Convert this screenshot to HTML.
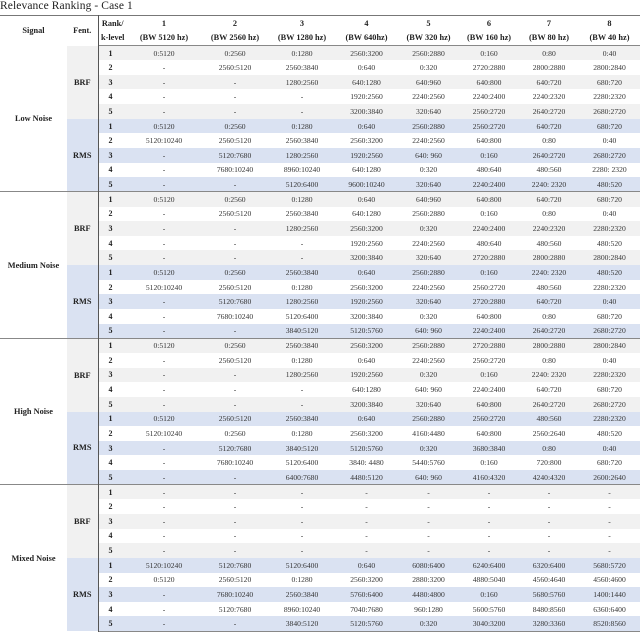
<!DOCTYPE html>
<html><head><meta charset="utf-8"><style>
*{margin:0;padding:0;box-sizing:border-box}
body{width:640px;height:632px;background:#fff;font-family:"Liberation Serif",serif;color:#333;overflow:hidden;position:relative}
.title{position:absolute;left:0;top:0;font-size:11.5px;line-height:12px;color:#222;letter-spacing:0.1px}
table{position:absolute;left:0;top:15px;width:640px;border-collapse:collapse;table-layout:fixed;font-size:7.6px}
td,th{text-align:center;vertical-align:middle;padding:0;white-space:nowrap;overflow:hidden}
thead tr{height:15px}
thead th{font-weight:bold;font-size:8.3px;color:#222}
thead tr:first-child th{border-top:1.5px solid #777}
thead tr:last-child th{border-bottom:1.5px solid #888}
tbody tr{height:14.65px}
.v{border-right:1px solid #555}
.s{font-weight:bold;font-size:8.3px;color:#222;background:#fff}
.f{font-weight:bold;font-size:8.3px;color:#222}
.k{font-weight:bold;font-size:8px;color:#222;text-align:left;padding-left:10px}
.g td{background:#f1f1f1}
.b td{background:#dae2f2}
.w td{background:#fff}
td.fg{background:#f1f1f1}
td.fb{background:#dae2f2}
td.s{background:#fff}
.top td{border-top:1.5px solid #888}
.last td{border-bottom:1.5px solid #888}
</style></head><body>
<div class="title">Relevance Ranking - Case 1</div>
<table>
<colgroup><col style="width:67px"><col style="width:31px"><col style="width:29px"><col style="width:74px"><col style="width:68px"><col style="width:66px"><col style="width:63px"><col style="width:61px"><col style="width:60px"><col style="width:60px"><col style="width:61px"></colgroup>
<thead>
<tr><th rowspan="2">Signal</th><th rowspan="2" class="v">Fent.</th><th>Rank/</th><th>1</th><th>2</th><th>3</th><th>4</th><th>5</th><th>6</th><th>7</th><th>8</th></tr>
<tr><th>k-level</th><th>(BW 5120 hz)</th><th>(BW 2560 hz)</th><th>(BW 1280 hz)</th><th>(BW 640hz)</th><th>(BW 320 hz)</th><th>(BW 160 hz)</th><th>(BW 80 hz)</th><th>(BW 40 hz)</th></tr>
</thead>
<tbody>
<tr class="g"><td rowspan="10" class="s">Low Noise</td><td rowspan="5" class="f fg v">BRF</td><td class="k">1</td><td>0:5120</td><td>0:2560</td><td>0:1280</td><td>2560:3200</td><td>2560:2880</td><td>0:160</td><td>0:80</td><td>0:40</td></tr>
<tr class="w"><td class="k">2</td><td>-</td><td>2560:5120</td><td>2560:3840</td><td>0:640</td><td>0:320</td><td>2720:2880</td><td>2800:2880</td><td>2800:2840</td></tr>
<tr class="g"><td class="k">3</td><td>-</td><td>-</td><td>1280:2560</td><td>640:1280</td><td>640:960</td><td>640:800</td><td>640:720</td><td>680:720</td></tr>
<tr class="w"><td class="k">4</td><td>-</td><td>-</td><td>-</td><td>1920:2560</td><td>2240:2560</td><td>2240:2400</td><td>2240:2320</td><td>2280:2320</td></tr>
<tr class="g"><td class="k">5</td><td>-</td><td>-</td><td>-</td><td>3200:3840</td><td>320:640</td><td>2560:2720</td><td>2640:2720</td><td>2680:2720</td></tr>
<tr class="b"><td rowspan="5" class="f fb v">RMS</td><td class="k">1</td><td>0:5120</td><td>0:2560</td><td>0:1280</td><td>0:640</td><td>2560:2880</td><td>2560:2720</td><td>640:720</td><td>680:720</td></tr>
<tr class="w"><td class="k">2</td><td>5120:10240</td><td>2560:5120</td><td>2560:3840</td><td>2560:3200</td><td>2240:2560</td><td>640:800</td><td>0:80</td><td>0:40</td></tr>
<tr class="b"><td class="k">3</td><td>-</td><td>5120:7680</td><td>1280:2560</td><td>1920:2560</td><td>640: 960</td><td>0:160</td><td>2640:2720</td><td>2680:2720</td></tr>
<tr class="w"><td class="k">4</td><td>-</td><td>7680:10240</td><td>8960:10240</td><td>640:1280</td><td>0:320</td><td>480:640</td><td>480:560</td><td>2280: 2320</td></tr>
<tr class="b"><td class="k">5</td><td>-</td><td>-</td><td>5120:6400</td><td>9600:10240</td><td>320:640</td><td>2240:2400</td><td>2240: 2320</td><td>480:520</td></tr>

<tr class="g top"><td rowspan="10" class="s">Medium Noise</td><td rowspan="5" class="f fg v">BRF</td><td class="k">1</td><td>0:5120</td><td>0:2560</td><td>0:1280</td><td>0:640</td><td>640:960</td><td>640:800</td><td>640:720</td><td>680:720</td></tr>
<tr class="w"><td class="k">2</td><td>-</td><td>2560:5120</td><td>2560:3840</td><td>640:1280</td><td>2560:2880</td><td>0:160</td><td>0:80</td><td>0:40</td></tr>
<tr class="g"><td class="k">3</td><td>-</td><td>-</td><td>1280:2560</td><td>2560:3200</td><td>0:320</td><td>2240:2400</td><td>2240:2320</td><td>2280:2320</td></tr>
<tr class="w"><td class="k">4</td><td>-</td><td>-</td><td>-</td><td>1920:2560</td><td>2240:2560</td><td>480:640</td><td>480:560</td><td>480:520</td></tr>
<tr class="g"><td class="k">5</td><td>-</td><td>-</td><td>-</td><td>3200:3840</td><td>320:640</td><td>2720:2880</td><td>2800:2880</td><td>2800:2840</td></tr>
<tr class="b"><td rowspan="5" class="f fb v">RMS</td><td class="k">1</td><td>0:5120</td><td>0:2560</td><td>2560:3840</td><td>0:640</td><td>2560:2880</td><td>0:160</td><td>2240: 2320</td><td>480:520</td></tr>
<tr class="w"><td class="k">2</td><td>5120:10240</td><td>2560:5120</td><td>0:1280</td><td>2560:3200</td><td>2240:2560</td><td>2560:2720</td><td>480:560</td><td>2280:2320</td></tr>
<tr class="b"><td class="k">3</td><td>-</td><td>5120:7680</td><td>1280:2560</td><td>1920:2560</td><td>320:640</td><td>2720:2880</td><td>640:720</td><td>0:40</td></tr>
<tr class="w"><td class="k">4</td><td>-</td><td>7680:10240</td><td>5120:6400</td><td>3200:3840</td><td>0:320</td><td>640:800</td><td>0:80</td><td>680:720</td></tr>
<tr class="b"><td class="k">5</td><td>-</td><td>-</td><td>3840:5120</td><td>5120:5760</td><td>640: 960</td><td>2240:2400</td><td>2640:2720</td><td>2680:2720</td></tr>

<tr class="g top"><td rowspan="10" class="s">High Noise</td><td rowspan="5" class="f fg v">BRF</td><td class="k">1</td><td>0:5120</td><td>0:2560</td><td>2560:3840</td><td>2560:3200</td><td>2560:2880</td><td>2720:2880</td><td>2800:2880</td><td>2800:2840</td></tr>
<tr class="w"><td class="k">2</td><td>-</td><td>2560:5120</td><td>0:1280</td><td>0:640</td><td>2240:2560</td><td>2560:2720</td><td>0:80</td><td>0:40</td></tr>
<tr class="g"><td class="k">3</td><td>-</td><td>-</td><td>1280:2560</td><td>1920:2560</td><td>0:320</td><td>0:160</td><td>2240: 2320</td><td>2280:2320</td></tr>
<tr class="w"><td class="k">4</td><td>-</td><td>-</td><td>-</td><td>640:1280</td><td>640: 960</td><td>2240:2400</td><td>640:720</td><td>680:720</td></tr>
<tr class="g"><td class="k">5</td><td>-</td><td>-</td><td>-</td><td>3200:3840</td><td>320:640</td><td>640:800</td><td>2640:2720</td><td>2680:2720</td></tr>
<tr class="b"><td rowspan="5" class="f fb v">RMS</td><td class="k">1</td><td>0:5120</td><td>2560:5120</td><td>2560:3840</td><td>0:640</td><td>2560:2880</td><td>2560:2720</td><td>480:560</td><td>2280:2320</td></tr>
<tr class="w"><td class="k">2</td><td>5120:10240</td><td>0:2560</td><td>0:1280</td><td>2560:3200</td><td>4160:4480</td><td>640:800</td><td>2560:2640</td><td>480:520</td></tr>
<tr class="b"><td class="k">3</td><td>-</td><td>5120:7680</td><td>3840:5120</td><td>5120:5760</td><td>0:320</td><td>3680:3840</td><td>0:80</td><td>0:40</td></tr>
<tr class="w"><td class="k">4</td><td>-</td><td>7680:10240</td><td>5120:6400</td><td>3840: 4480</td><td>5440:5760</td><td>0:160</td><td>720:800</td><td>680:720</td></tr>
<tr class="b"><td class="k">5</td><td>-</td><td>-</td><td>6400:7680</td><td>4480:5120</td><td>640: 960</td><td>4160:4320</td><td>4240:4320</td><td>2600:2640</td></tr>

<tr class="g top"><td rowspan="10" class="s">Mixed Noise</td><td rowspan="5" class="f fg v">BRF</td><td class="k">1</td><td>-</td><td>-</td><td>-</td><td>-</td><td>-</td><td>-</td><td>-</td><td>-</td></tr>
<tr class="w"><td class="k">2</td><td>-</td><td>-</td><td>-</td><td>-</td><td>-</td><td>-</td><td>-</td><td>-</td></tr>
<tr class="g"><td class="k">3</td><td>-</td><td>-</td><td>-</td><td>-</td><td>-</td><td>-</td><td>-</td><td>-</td></tr>
<tr class="w"><td class="k">4</td><td>-</td><td>-</td><td>-</td><td>-</td><td>-</td><td>-</td><td>-</td><td>-</td></tr>
<tr class="g"><td class="k">5</td><td>-</td><td>-</td><td>-</td><td>-</td><td>-</td><td>-</td><td>-</td><td>-</td></tr>
<tr class="b"><td rowspan="5" class="f fb v">RMS</td><td class="k">1</td><td>5120:10240</td><td>5120:7680</td><td>5120:6400</td><td>0:640</td><td>6080:6400</td><td>6240:6400</td><td>6320:6400</td><td>5680:5720</td></tr>
<tr class="w"><td class="k">2</td><td>0:5120</td><td>2560:5120</td><td>0:1280</td><td>2560:3200</td><td>2880:3200</td><td>4880:5040</td><td>4560:4640</td><td>4560:4600</td></tr>
<tr class="b"><td class="k">3</td><td>-</td><td>7680:10240</td><td>2560:3840</td><td>5760:6400</td><td>4480:4800</td><td>0:160</td><td>5680:5760</td><td>1400:1440</td></tr>
<tr class="w"><td class="k">4</td><td>-</td><td>5120:7680</td><td>8960:10240</td><td>7040:7680</td><td>960:1280</td><td>5600:5760</td><td>8480:8560</td><td>6360:6400</td></tr>
<tr class="b last"><td class="k">5</td><td>-</td><td>-</td><td>3840:5120</td><td>5120:5760</td><td>0:320</td><td>3040:3200</td><td>3280:3360</td><td>8520:8560</td></tr>
</tbody>
</table>
<div style="position:absolute;left:97.5px;top:16px;width:1px;height:616px;background:#555"></div>
</body></html>
